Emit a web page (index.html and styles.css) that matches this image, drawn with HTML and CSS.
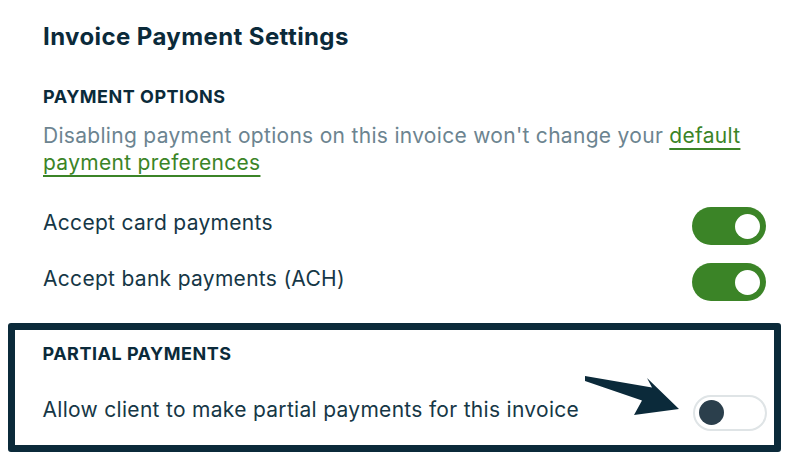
FILE: index.html
```html
<!DOCTYPE html>
<html>
<head>
<meta charset="utf-8">
<link rel="stylesheet" href="styles.css">
</head>
<body>
<div class="page">
  <section class="section">
    <h1 class="title">Invoice Payment Settings</h1>
    <h2 class="label label-options">PAYMENT OPTIONS</h2>
    <p class="desc">Disabling payment options on this invoice won't change your <a class="link" href="#">default</a> <a class="link" href="#">payment preferences</a></p>
    <div class="row row-first">
      <span class="row-text">Accept card payments</span>
      <span class="toggle on"><span class="knob"></span></span>
    </div>
    <div class="row row-second">
      <span class="row-text">Accept bank payments (ACH)</span>
      <span class="toggle on"><span class="knob"></span></span>
    </div>
  </section>
  <section class="section highlight">
    <h2 class="label">PARTIAL PAYMENTS</h2>
    <div class="row row-partial">
      <span class="row-text">Allow client to make partial payments for this invoice</span>
      <span class="toggle off"><span class="knob"></span></span>
      <svg class="arrow" width="100" height="45" viewBox="585 372 100 45">
        <polygon points="585,376 652,387.5 647,378 679,409 634,415 642,400.5 585,381" fill="#0b2a3a"/>
      </svg>
    </div>
  </section>
</div>
</body>
</html>
```

FILE: styles.css
```css
html, body {
  margin: 0;
  padding: 0;
  background: #ffffff;
}
body {
  font-family: Inter, "Noto Sans", sans-serif;
  color: #163746;
}
.page {
  width: 787px;
  height: 458px;
  padding: 0 6px 0 8px;
  box-sizing: border-box;
  overflow: hidden;
}
.section {
  padding: 0 15px 0 35px;
}
.title {
  margin: 0;
  padding-top: 24px;
  font-size: 24px;
  line-height: 26px;
  font-weight: 700;
  color: #0b2a3a;
  letter-spacing: 0.4px;
}
.label {
  margin: 0;
  font-size: 18px;
  line-height: 20px;
  font-weight: 700;
  color: #0b2a3a;
  letter-spacing: 0.5px;
}
.label-options {
  margin-top: 37px;
}
.desc {
  margin: 14.5px 0 0;
  font-size: 21px;
  line-height: 27px;
  color: #6c8490;
  letter-spacing: 0.3px;
}
.link {
  color: #3b8427;
  text-decoration: underline;
  text-decoration-thickness: 1.5px;
  text-underline-offset: 5px;
}
.row {
  display: flex;
  align-items: center;
  justify-content: space-between;
  height: 38px;
  position: relative;
}
.row-first {
  margin-top: 31.5px;
}
.row-second {
  margin-top: 18px;
}
.row-text {
  font-size: 21px;
  line-height: 24px;
  color: #163746;
  letter-spacing: 0.3px;
  padding-bottom: 7px;
}
.row-partial .row-text {
  padding-bottom: 5px;
}
.toggle {
  width: 74px;
  height: 38px;
  border-radius: 19px;
  box-sizing: border-box;
  display: flex;
  align-items: center;
  padding: 0 6px;
}
.toggle .knob {
  width: 25px;
  height: 25px;
  border-radius: 50%;
}
.toggle.on {
  background: #3b8427;
  justify-content: flex-end;
}
.toggle.on .knob {
  background: #ffffff;
}
.toggle.off {
  background: #ffffff;
  border: 2px solid #dfe4e6;
  justify-content: flex-start;
  padding: 0 4px;
  height: 36px;
}
.toggle.off .knob {
  background: #2b3f4c;
}
.highlight {
  margin-top: 22px;
  border: 7.5px solid #0b2a3a;
  border-radius: 3px;
  padding: 13.5px 7px 13.5px 27.5px;
}
.row-partial {
  margin-top: 30px;
}
.arrow {
  position: absolute;
  left: 542.5px;
  top: -22px;
}
```
